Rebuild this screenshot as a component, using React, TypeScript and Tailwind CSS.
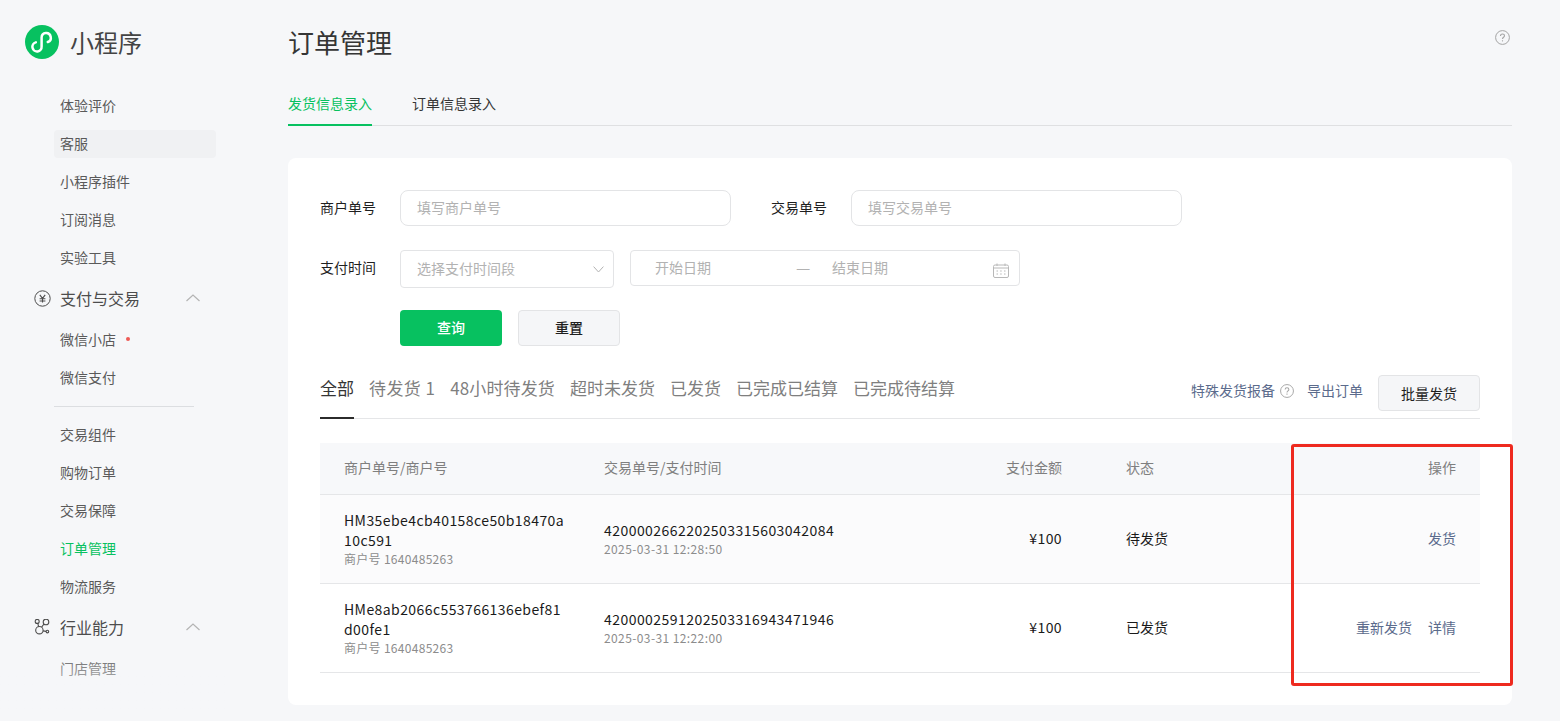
import React from 'react';

const font = '[font-family:"Noto_Sans_CJK_SC","Noto_Sans",sans-serif]';

const Chevron = () => (
  <svg width="16" height="16" viewBox="0 0 16 16" fill="none" stroke="#b4b4b4" strokeWidth="1.2">
    <path d="M1.5 11 8 5l6.5 6" />
  </svg>
);

const NavItem = ({ label, hover, active, dot, className = 'mb-2.5' }: { label: string; hover?: boolean; active?: boolean; dot?: boolean; className?: string }) => (
  <div className={`ml-[54px] flex h-7 w-[162px] items-center rounded pb-[2px] pl-1.5 text-sm ${hover ? 'bg-[#f0f1f3]' : ''} ${active ? 'text-[#07c160]' : 'text-[#5a5a5a]'} ${className}`}>
    {label}
    {dot && <span className="ml-2.5 h-1 w-1 rounded-full bg-[#ee5a55]" />}
  </div>
);

const NavGroup = ({ label, icon }: { label: string; icon: React.ReactNode }) => (
  <div className="-mt-[2px] flex h-9 items-center">
    <span className="ml-[33px] mr-[9px] flex w-[18px] justify-center">{icon}</span>
    <span className="w-[125px] text-base text-[#4d4d4d]">{label}</span>
    <Chevron />
  </div>
);

const Sidebar = () => (
  <aside className="relative h-[721px] w-[232px] shrink-0 overflow-hidden">
    <div className="flex h-[92px] items-start pl-[25px] pt-[25px]">
      <svg width="34" height="34" viewBox="0 0 34 34" fill="none">
        <circle cx="17" cy="17" r="17" fill="#07c160" />
        <path d="M10.8 17.4A4.6 4.6 0 1 0 16.6 21.5V12.5A4.6 4.6 0 1 1 22.8 17" stroke="#fff" strokeWidth="2.5" strokeLinecap="round" />
      </svg>
      <span className="ml-[11px] text-2xl leading-[34px] text-[#444]">小程序</span>
    </div>
    <NavItem label="体验评价" />
    <NavItem label="客服" hover />
    <NavItem label="小程序插件" />
    <NavItem label="订阅消息" />
    <NavItem label="实验工具" />
    <NavGroup
      label="支付与交易"
      icon={
        <svg width="17" height="17" viewBox="0 0 17 17" fill="none" stroke="#4d4d4d">
          <circle cx="8.5" cy="8.5" r="7.7" />
          <path d="M5.8 4.8 8.5 8.4l2.7-3.6M5.6 8.8h5.8M5.6 11h5.8M8.5 8.4v4.2" strokeWidth="1.1" />
        </svg>
      }
    />
    <NavItem label="微信小店" dot className="mb-2.5 mt-2.5" />
    <NavItem label="微信支付" className="mb-[14px]" />
    <div className="ml-[54px] h-px w-[140px] bg-[#dcdee1]" />
    <NavItem label="交易组件" className="mb-2.5 mt-[14px]" />
    <NavItem label="购物订单" />
    <NavItem label="交易保障" />
    <NavItem label="订单管理" active />
    <NavItem label="物流服务" />
    <NavGroup
      label="行业能力"
      icon={
        <svg width="16" height="16" viewBox="0 0 16 16" fill="none" stroke="#4d4d4d" strokeWidth="1.1">
          <circle cx="3.2" cy="2.4" r="2" />
          <circle cx="12" cy="3" r="2.8" />
          <circle cx="5.4" cy="11.2" r="3.7" />
          <circle cx="13.4" cy="12.6" r="1.3" />
          <path d="M3.8 4.3 4.6 7.6M10 5 7.6 8.2M9 11.9l3.1.5" />
        </svg>
      }
    />
    <NavItem label="门店管理" className="mt-2.5" />
    <div className="absolute left-0 top-[650px] h-[60px] w-full bg-gradient-to-b from-[#f6f7f9]/0 to-[#f6f7f9]" />
  </aside>
);

const HelpIcon = ({ size = 15, color = '#a3a3a3' }: { size?: number; color?: string }) => (
  <svg width={size} height={size} viewBox="0 0 15 15" fill="none" stroke={color}>
    <circle cx="7.5" cy="7.5" r="6.9" />
    <path d="M5.5 6c0-1.2.9-2 2-2s2 .8 2 1.8c0 1.5-2 1.5-2 3.2" strokeWidth="1.1" />
    <path d="M7.5 10.3v1.1" strokeWidth="1.1" />
  </svg>
);

const Field = ({ label, placeholder, className }: { label: string; placeholder: string; className: string }) => (
  <div className="flex items-center">
    <span className={`pb-[2px] text-sm text-[#1f1f1f] ${className}`}>{label}</span>
    <div className="flex h-[36px] w-[331px] items-center rounded-lg border border-[#e3e4e6] pb-[2px] pl-4 text-sm text-[#b2b2b2]">{placeholder}</div>
  </div>
);

const SearchForm = () => (
  <div>
    <div className="flex">
      <Field label="商户单号" placeholder="填写商户单号" className="w-20" />
      <div className="ml-10">
        <Field label="交易单号" placeholder="填写交易单号" className="w-20" />
      </div>
    </div>
    <div className="mt-6 flex items-start">
      <span className="mt-[7px] w-20 text-sm text-[#1f1f1f]">支付时间</span>
      <div className="flex h-[38px] w-[214px] items-center justify-between rounded border border-[#e3e4e6] pl-4 pr-[9px] text-sm text-[#b2b2b2]">
        <span className="mb-[2px]">选择支付时间段</span>
        <svg width="11" height="7" viewBox="0 0 11 7" fill="none" stroke="#b2b2b2">
          <path d="M.6.6 5.5 6 10.4.6" />
        </svg>
      </div>
      <div className="ml-4 flex h-[36px] w-[390px] items-center rounded border border-[#e3e4e6] pl-6 pr-[10px] text-sm text-[#b2b2b2]">
        <span className="mb-[2px] w-[141px]">开始日期</span>
        <span className="mb-[2px] w-[36px] text-base">—</span>
        <span className="mb-[2px] flex-1">结束日期</span>
        <svg width="16" height="15" viewBox="0 0 16 15" fill="none" stroke="#b8b8b8" className="mt-1">
          <rect x=".5" y="2" width="15" height="12.5" rx="1.5" />
          <path d="M.5 5h15M4 .5V3M12 .5V3" />
          <path d="M3.5 8h1.5M7.2 8h1.5M11 8h1.5M3.5 11h1.5M7.2 11h1.5M11 11h1.5" />
        </svg>
      </div>
    </div>
    <div className="ml-20 mt-[22px] flex gap-4">
      <button className="h-9 w-[102px] rounded bg-[#07c160] pb-[2px] text-sm font-medium text-white">查询</button>
      <button className="h-9 w-[102px] rounded border border-[#e3e4e6] bg-[#f5f6f8] pb-[2px] text-sm font-medium text-[#1f1f1f]">重置</button>
    </div>
  </div>
);

const statusTabs = [
  { label: '待发货 1', cls: 'tracking-[0.4px]' },
  { label: '48小时待发货', cls: 'tracking-[0.12px]' },
  { label: '超时未发货', cls: '' },
  { label: '已发货', cls: '' },
  { label: '已完成已结算', cls: '' },
  { label: '已完成待结算', cls: '' },
];

const StatusTabs = () => (
  <div className="mt-[29px] flex h-[44px] items-start border-b border-[#e5e6e8]">
    <div className="flex gap-[15px] text-[17px] leading-[26px] text-[#7f7f7f]">
      <span className="h-[44px] w-[34px] border-b-2 border-[#2b2b2b] text-[#353535]">全部</span>
      {statusTabs.map((tab) => (
        <span key={tab.label} className={tab.cls}>{tab.label}</span>
      ))}
    </div>
    <div className="ml-auto flex items-start text-sm text-[#5b6b8c]">
      <span className="mt-[5px]">特殊发货报备</span>
      <span className="ml-[5px] mt-[9px]"><HelpIcon size={14} /></span>
      <span className="ml-[13px] mt-[5px]">导出订单</span>
      <button className="ml-[15px] h-9 w-[102px] rounded border border-[#e3e4e6] bg-[#f5f6f8] text-sm text-[#1f1f1f]">批量发货</button>
    </div>
  </div>
);

const rowGrid = 'grid grid-cols-[260px_400px_122px_178px_200px] items-center border-b border-[#e5e6e8]';

const orders = [
  { id: 'HM35ebe4cb40158ce50b18470a', id2: '10c591', tx: '4200002662202503315603042084', time: '2025-03-31 12:28:50', status: '待发货', shaded: true, actions: ['发货'] },
  { id: 'HMe8ab2066c553766136ebef81', id2: 'd00fe1', tx: '4200002591202503316943471946', time: '2025-03-31 12:22:00', status: '已发货', shaded: false, actions: ['重新发货', '详情'] },
];

const OrderTable = () => (
  <div className="mt-6">
    <div className={`${rowGrid} h-[52px] bg-[#f7f8fa] pb-1 text-sm text-[#7f7f7f]`}>
      <span className="pl-6">商户单号/商户号</span>
      <span className="pl-6">交易单号/支付时间</span>
      <span className="pr-10 text-right">支付金额</span>
      <span className="pl-6">状态</span>
      <span className="pr-6 text-right">操作</span>
    </div>
    {orders.map((o) => (
      <div key={o.tx} className={`${rowGrid} h-[89px] ${o.shaded ? 'bg-[#fbfbfc]' : ''} text-sm text-[#1a1a1a]`}>
        <div className="pl-6">
          <div className="leading-5 tracking-[0.42px]">{o.id}<br />{o.id2}</div>
          <div className="text-xs leading-[18px] tracking-[0.3px] text-[#8c8c8c]">商户号 1640485263</div>
        </div>
        <div className="pl-6">
          <div className="leading-5 tracking-[0.45px]">{o.tx}</div>
          <div className="text-xs leading-[18px] tracking-[0.4px] text-[#8c8c8c]">{o.time}</div>
        </div>
        <span className="mb-[2px] pr-10 text-right tracking-[0.4px]">¥100</span>
        <span className="mb-[2px] pl-6">{o.status}</span>
        <div className="mb-[2px] flex justify-end gap-4 pr-6 text-sm text-[#5b6b8c]">
          {o.actions.map((a) => (
            <span key={a}>{a}</span>
          ))}
        </div>
      </div>
    ))}
  </div>
);

export default function App() {
  return (
    <div className={`relative flex h-[721px] overflow-hidden bg-[#f6f7f9] ${font}`}>
      <Sidebar />
      <main className="w-[1280px] pl-[56px]">
        <div className="flex items-start justify-between pt-[22px]">
          <h1 className="text-[26px] leading-10 text-[#353535]">订单管理</h1>
          <span className="mr-[2px] mt-2"><HelpIcon /></span>
        </div>
        <div className="mt-[20px] flex h-[44px] gap-10 border-b border-[#dfe0e2] text-sm leading-[43px]">
          <span className="-mb-px border-b-2 border-[#07c160] text-[#07c160]">发货信息录入</span>
          <span className="text-[#353535]">订单信息录入</span>
        </div>
        <section className="mt-[32px] h-[547px] rounded-lg bg-white px-8 pt-8">
          <SearchForm />
          <StatusTabs />
          <OrderTable />
        </section>
      </main>
      <div className="absolute left-[1291px] top-[444px] h-[242px] w-[222px] rounded-[3px] border-[3px] border-[#ee2a1f]" />
    </div>
  );
}
